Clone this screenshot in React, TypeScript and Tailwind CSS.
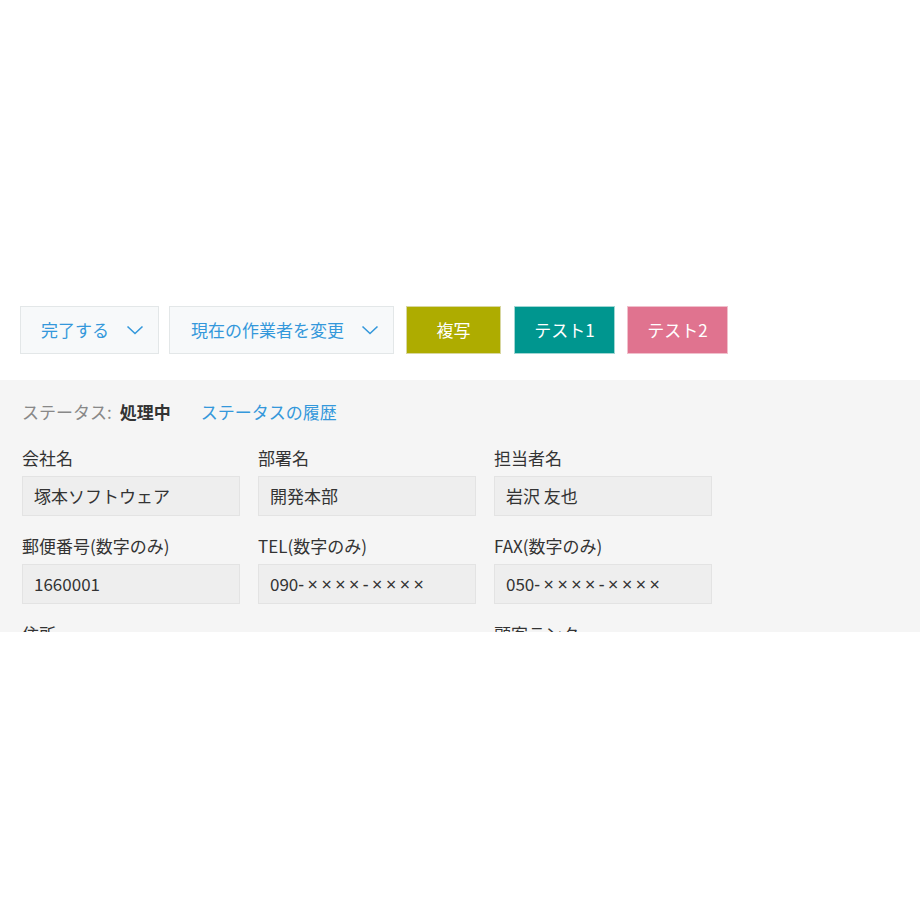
import React from "react";

const Chevron = () => (
  <svg width="18" height="10" viewBox="0 0 18 10" fill="none" className="shrink-0">
    <polyline points="1.5,1.5 9,8.5 16.5,1.5" stroke="#3498db" strokeWidth="1.6" fill="none" />
  </svg>
);

const Masked = ({ prefix }: { prefix: string }) => (
  <span>
    {prefix}
    <span className="tracking-[3.5px] text-[18px]" style={{ fontFamily: '"Noto Sans", sans-serif' }}>
      -××××-××××
    </span>
  </span>
);

const Field = ({ label, children }: { label: string; children?: React.ReactNode }) => (
  <div className="flex flex-col w-[218px]">
    <div className="h-[24px] leading-[24px] text-[17px] text-[#333333] whitespace-nowrap">{label}</div>
    {children !== undefined && (
      <div className="mt-[6px] h-[40px] bg-[#eeeeee] border border-[#e3e3e3] px-[11px] flex items-center text-[17px] text-[#333333] whitespace-nowrap">
        {children}
      </div>
    )}
  </div>
);

export default function App() {
  return (
    <div
      className="w-[920px] h-[920px] bg-white overflow-hidden"
      style={{ fontFamily: '"Noto Sans CJK JP", "Noto Sans", sans-serif' }}
    >
      <div className="pt-[306px] pl-[20px] flex items-center h-[354px]">
        <button className="h-[48px] w-[139px] bg-[#f7f9fa] border border-[#e3e7e8] flex items-center pl-[20px] pr-[14px] justify-between text-[17px] text-[#3498db]">
          <span>完了する</span>
          <Chevron />
        </button>
        <button className="ml-[10px] h-[48px] w-[225px] bg-[#f7f9fa] border border-[#e3e7e8] flex items-center pl-[21px] pr-[14px] justify-between text-[17px] text-[#3498db]">
          <span>現在の作業者を変更</span>
          <Chevron />
        </button>
        <button className="ml-[12px] h-[48px] w-[95px] bg-[#aeac00] border border-[#d8d7a0] text-white text-[17px] flex items-center justify-center">
          複写
        </button>
        <button className="ml-[13px] h-[48px] w-[101px] bg-[#00968f] border border-[#a0d6d3] text-white text-[17px] flex items-center justify-center">
          テスト1
        </button>
        <button className="ml-[12px] h-[48px] w-[101px] bg-[#e0738f] border border-[#f0c0cc] text-white text-[17px] flex items-center justify-center">
          テスト2
        </button>
      </div>
      <div className="mt-[26px] h-[252px] bg-[#f5f5f5] overflow-hidden pt-[20px] pl-[22px]">
        <div className="flex items-center h-[24px] text-[17px] whitespace-nowrap">
          <span className="text-[#888888]">ステータス:</span>
          <span className="ml-[8px] font-bold text-[#333333]">処理中</span>
          <span className="ml-[30px] text-[#3498db]">ステータスの履歴</span>
        </div>
        <div className="mt-[22px] flex flex-col gap-[18px]">
          <div className="flex gap-[18px]">
            <Field label="会社名">塚本ソフトウェア</Field>
            <Field label="部署名">開発本部</Field>
            <Field label="担当者名">岩沢 友也</Field>
          </div>
          <div className="flex gap-[18px]">
            <Field label="郵便番号(数字のみ)">1660001</Field>
            <Field label="TEL(数字のみ)">
              <Masked prefix="090" />
            </Field>
            <Field label="FAX(数字のみ)">
              <Masked prefix="050" />
            </Field>
          </div>
          <div className="flex gap-[18px]">
            <Field label="住所" />
            <div className="w-[218px]" />
            <Field label="顧客ランク" />
          </div>
        </div>
      </div>
    </div>
  );
}
